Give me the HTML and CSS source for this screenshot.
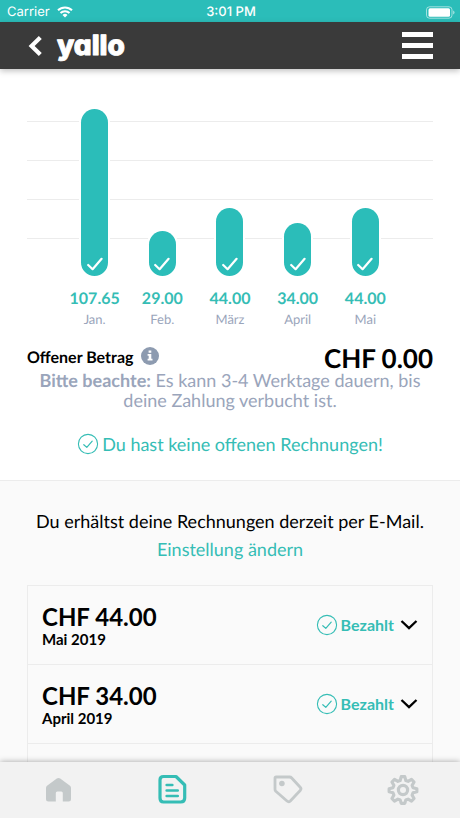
FILE: index.html
```html
<!DOCTYPE html>
<html lang="de">
<head>
<meta charset="utf-8">
<meta name="viewport" content="width=device-width, initial-scale=1">
<title>yallo</title>
<link rel="stylesheet" href="styles.css">
</head>
<body>
<svg class="defs" aria-hidden="true">
  <symbol id="tick" viewBox="0 0 16 14"><path d="M1.2 8 5.6 12.2 14.6 1.8" fill="none" stroke="currentColor" stroke-width="2.2" stroke-linecap="round" stroke-linejoin="round"/></symbol>
  <symbol id="ring-tick" viewBox="0 0 22 22"><circle cx="11" cy="11" r="9.6" fill="none" stroke="currentColor" stroke-width="1.1"/><path d="M6.8 11.7 9.8 14.4 15.2 8.2" fill="none" stroke="currentColor" stroke-width="1.2" stroke-linecap="round" stroke-linejoin="round"/></symbol>
  <symbol id="chevron" viewBox="0 0 18 12"><path d="M1.5 2 9 9.2 16.5 2" fill="none" stroke="currentColor" stroke-width="2.3"/></symbol>
</svg>

<div class="status">
  <div class="status-left">
    <span>Carrier</span>
    <svg width="16" height="12" viewBox="0 0 16 12" fill="none" stroke="currentColor" stroke-width="2"><path d="M1 4.300a10 10 0 0 1 14 0M3.500 7a6.400 6.400 0 0 1 9 0"/><path d="M8 11.500 5.500 9a3.600 3.600 0 0 1 5 0Z" fill="currentColor" stroke="none"/></svg>
  </div>
  <span class="clock">3:01 PM</span>
  <div class="status-right">
    <svg width="29" height="13" viewBox="0 0 29 13"><rect x=".5" y=".8" width="25.500" height="11.400" rx="3" fill="none" stroke="currentColor" stroke-opacity=".55"/><rect x="2.500" y="2.300" width="21.500" height="8.400" rx="1.500" fill="currentColor"/><path d="M27.200 4.500v4a2.200 2.200 0 0 0 0-4Z" fill="currentColor" fill-opacity=".6"/></svg>
  </div>
</div>

<header class="bar">
  <button class="icon-button" type="button" aria-label="Zurück">
    <svg width="16" height="20" viewBox="0 0 16 20"><path d="M13.300 1.500 4.600 10 13.300 18.500" fill="none" stroke="currentColor" stroke-width="4.200"/></svg>
  </button>
  <a class="brand" href="#">
    <svg width="76" height="40" viewBox="0 0 76 40"><text class="brand-text" x="2" y="29">yallo</text></svg>
  </a>
  <button class="icon-button menu" type="button" aria-label="Menü">
    <svg width="31" height="28" viewBox="0 0 31 28" fill="currentColor"><path d="M0 0h31v5H0zM0 11h31v5H0zM0 22h31v5H0z"/></svg>
  </button>
</header>

<main class="content">
  <section class="overview">
    <div class="chart">
      <div class="month"><div class="plot"><div class="pill" style="height:167px"><svg class="tick"><use href="#tick"/></svg></div></div><strong>107.65</strong><span>Jan.</span></div>
      <div class="month"><div class="plot"><div class="pill" style="height:45px"><svg class="tick"><use href="#tick"/></svg></div></div><strong>29.00</strong><span>Feb.</span></div>
      <div class="month"><div class="plot"><div class="pill" style="height:68px"><svg class="tick"><use href="#tick"/></svg></div></div><strong>44.00</strong><span>März</span></div>
      <div class="month"><div class="plot"><div class="pill" style="height:53px"><svg class="tick"><use href="#tick"/></svg></div></div><strong>34.00</strong><span>April</span></div>
      <div class="month"><div class="plot"><div class="pill" style="height:68px"><svg class="tick"><use href="#tick"/></svg></div></div><strong>44.00</strong><span>Mai</span></div>
    </div>
    <div class="due">
      <h1>Offener Betrag</h1>
      <button class="info" type="button" aria-label="Information">
        <svg width="18" height="18" viewBox="0 0 18 18"><circle cx="9" cy="9" r="9" fill="currentColor"/><path d="M7.600 3.500h2.700v2.300H7.600zM6.600 7h3.700v4.700h1.200v1.700H6.600v-1.700h1.100v-3H6.600z" fill="#fff"/></svg>
      </button>
      <strong class="total">CHF 0.00</strong>
    </div>
    <p class="note"><b>Bitte beachte:</b> Es kann 3-4 Werktage dauern, bis deine Zahlung verbucht ist.</p>
    <p class="clear"><svg class="ring"><use href="#ring-tick"/></svg>Du hast keine offenen Rechnungen!</p>
  </section>

  <section class="bills">
    <p class="delivery">Du erhältst deine Rechnungen derzeit per E-Mail.</p>
    <a class="change" href="#">Einstellung ändern</a>
    <ul class="list">
      <li><button class="bill" type="button">
        <span class="sum"><b>CHF 44.00</b><small>Mai 2019</small></span>
        <span class="state"><svg class="ring"><use href="#ring-tick"/></svg>Bezahlt</span>
        <svg class="chevron"><use href="#chevron"/></svg>
      </button></li>
      <li><button class="bill" type="button">
        <span class="sum"><b>CHF 34.00</b><small>April 2019</small></span>
        <span class="state"><svg class="ring"><use href="#ring-tick"/></svg>Bezahlt</span>
        <svg class="chevron"><use href="#chevron"/></svg>
      </button></li>
      <li></li>
    </ul>
  </section>
</main>

<nav class="tabs">
  <a href="#" aria-label="Start"><svg width="32" height="32" viewBox="0 0 32 32"><path d="M14.800 4.500q1.700-1.100 3.400 0L28 11.700q1 .8 1 2.200V25q0 2.500-2.500 2.500h-5.700V19q0-1.500-1.500-1.500h-4q-1.500 0-1.500 1.500v8.500H6.500Q4 27.500 4 25V13.900q0-1.400 1-2.200Z" fill="currentColor"/></svg></a>
  <a class="active" href="#" aria-label="Rechnungen"><svg width="32" height="32" viewBox="0 0 32 32" fill="none" stroke="currentColor" stroke-width="3.200" stroke-linecap="round" stroke-linejoin="round"><path d="M6.500 2.500H19L27.700 11V24q0 4-4 4H6.500q-3.500 0-3.500-4V6q0-3.500 3.500-3.500Z"/><path d="M9.700 11h5.600M9.700 16.500h11M9.700 22h11" stroke-width="2.700"/></svg></a>
  <a href="#" aria-label="Angebote"><svg width="32" height="32" viewBox="0 0 32 32"><path d="M4 3h13.500q1.300 0 2.200 1l8.500 9.300q1.500 1.600 0 3.200L18.300 27q-1.600 1.500-3.300 0L3.800 17.300Q3 16.500 3 15.300V4q0-1 1-1Z" fill="none" stroke="currentColor" stroke-width="2.800" stroke-linejoin="round"/><circle cx="9.900" cy="9.500" r="2.800" fill="currentColor"/></svg></a>
  <a href="#" aria-label="Einstellungen"><svg width="32" height="32" viewBox="0 0 32 32" fill="none" stroke="currentColor" stroke-width="3.100" stroke-linejoin="round"><circle cx="16" cy="16" r="4.600" stroke-width="3.200"/><path d="M14.200 2.600h3.600l1 3.900 2.300.9 3.400-2 2.600 2.600-2 3.400.9 2.300 3.900 1v3.100l-3.900 1-.9 2.300 2 3.400-2.600 2.600-3.400-2-2.300.9-1 3.400h-3.600l-1-3.400-2.300-.9-3.400 2-2.600-2.600 2-3.400-.9-2.300-3.900-1v-3.100l3.900-1 .9-2.300-2-3.400 2.600-2.600 3.400 2 2.300-.9Z"/></svg></a>
</nav>
</body>
</html>
```
FILE: styles.css
```css
:root {
  --teal: #2bbdb9;
  --teal-text: #35bdb5;
  --grey: #9aa5bb;
  --line: #ececec;
}

* {
  box-sizing: border-box;
}

body {
  display: flex;
  flex-direction: column;
  height: 100vh;
  margin: 0;
  overflow: hidden;
  background: #fff;
  color: #000;
  font-family: Lato, sans-serif;
  text-rendering: geometricPrecision;
}

h1,
p,
ul {
  margin: 0;
  padding: 0;
}

button {
  padding: 0;
  border: 0;
  background: none;
  color: inherit;
  font: inherit;
}

a {
  color: inherit;
  text-decoration: none;
}

svg {
  display: block;
  flex: none;
}

.defs {
  position: absolute;
  width: 0;
  height: 0;
}

.status {
  display: grid;
  grid-template-columns: 1fr auto 1fr;
  align-items: center;
  flex: none;
  height: 22px;
  padding: 2px 5px 0 7px;
  background: var(--teal);
  color: #fff;
  font: 13px/20px Inter, sans-serif;
}

.status-left {
  display: flex;
  align-items: center;
  gap: 7px;
}

.status-right {
  display: flex;
  justify-content: flex-end;
}

.clock {
  font-weight: 500;
}

.bar {
  z-index: 1;
  display: flex;
  align-items: center;
  flex: none;
  height: 47px;
  padding: 0 27px;
  background: #3a3a3a;
  box-shadow: 0 2px 6px rgba(0, 0, 0, 0.25);
  color: #fff;
}

.brand {
  margin-left: 12px;
}

.brand-text {
  fill: #fff;
  stroke: #fff;
  stroke-width: 1px;
  stroke-linejoin: round;
  font-family: Inter, sans-serif;
  font-feature-settings: "cv11";
  font-size: 28px;
  font-weight: 800;
}

.menu {
  margin-left: auto;
}

.content {
  display: flex;
  flex-direction: column;
  flex: 1;
  min-height: 0;
  overflow: hidden;
}

.overview {
  flex: none;
  padding: 13px 27px 24px;
}

.chart {
  display: grid;
  grid-template-columns: repeat(5, 1fr);
  padding: 0 calc(100% / 12);
  background: repeating-linear-gradient(var(--line) 0 1px, transparent 1px 39px) 0 39px / 100% 118px no-repeat;
}

.month {
  display: flex;
  flex-direction: column;
  align-items: center;
  color: var(--grey);
  font-size: 13px;
  line-height: 20px;
}

.month strong {
  margin-top: 13px;
  color: var(--teal-text);
  font-size: 16px;
  line-height: 20px;
}

.plot {
  display: flex;
  align-items: flex-end;
  height: 194px;
}

.pill {
  display: flex;
  align-items: flex-end;
  justify-content: center;
  width: 27px;
  padding-bottom: 5px;
  border-radius: 14px;
  background: var(--teal);
  box-shadow: 0 0 0 2px #fff;
  color: #fff;
}

.tick {
  width: 16px;
  height: 14px;
}

.due {
  display: flex;
  align-items: center;
  height: 24px;
  margin-top: 17px;
}

.due h1 {
  font-size: 16px;
  line-height: 20px;
}

.info {
  margin: 0 0 4px 8px;
  color: #8d9bb0;
}

.total {
  margin-left: auto;
  font-size: 26px;
  line-height: 24px;
}

.note {
  padding: 0 10px;
  color: var(--grey);
  font-size: 18px;
  line-height: 20px;
  text-align: center;
}

.clear {
  display: flex;
  align-items: center;
  justify-content: center;
  gap: 3px;
  margin-top: 22px;
  color: var(--teal-text);
  font-size: 18px;
  line-height: 24px;
}

.ring {
  width: 22px;
  height: 22px;
}

.bills {
  display: flex;
  flex-direction: column;
  flex: 1;
  min-height: 0;
  padding: 26px 27px 0;
  border-top: 1px solid var(--line);
  background: #fafafa;
  font-size: 18px;
  line-height: 28px;
  text-align: center;
}

.change {
  color: var(--teal-text);
}

.list {
  flex: 1;
  min-height: 0;
  margin-top: 22px;
  border: solid var(--line);
  border-width: 1px 1px 0;
  list-style: none;
}

.list li + li {
  border-top: 1px solid var(--line);
}

.bill {
  display: flex;
  align-items: center;
  width: 100%;
  height: 78px;
  padding: 0 14px;
  text-align: left;
}

.sum {
  display: flex;
  flex-direction: column;
  padding-top: 4px;
}

.sum b {
  font-size: 24px;
  line-height: 24px;
}

.sum small {
  font-size: 15px;
  font-weight: 700;
  line-height: 20px;
}

.state {
  display: flex;
  align-items: center;
  gap: 3px;
  margin-left: auto;
  color: var(--teal-text);
  font-size: 16px;
  font-weight: 700;
  line-height: 20px;
}

.chevron {
  width: 18px;
  height: 12px;
  margin-left: 6px;
}

.tabs {
  z-index: 1;
  display: grid;
  grid-template-columns: repeat(4, 1fr);
  flex: none;
  height: 56px;
  background: #f2f2f2;
  box-shadow: 0 0 6px rgba(0, 0, 0, 0.35);
  color: #c4c9ca;
}

.tabs a {
  display: grid;
  place-items: center;
}

.tabs .active {
  color: var(--teal-text);
}
```
